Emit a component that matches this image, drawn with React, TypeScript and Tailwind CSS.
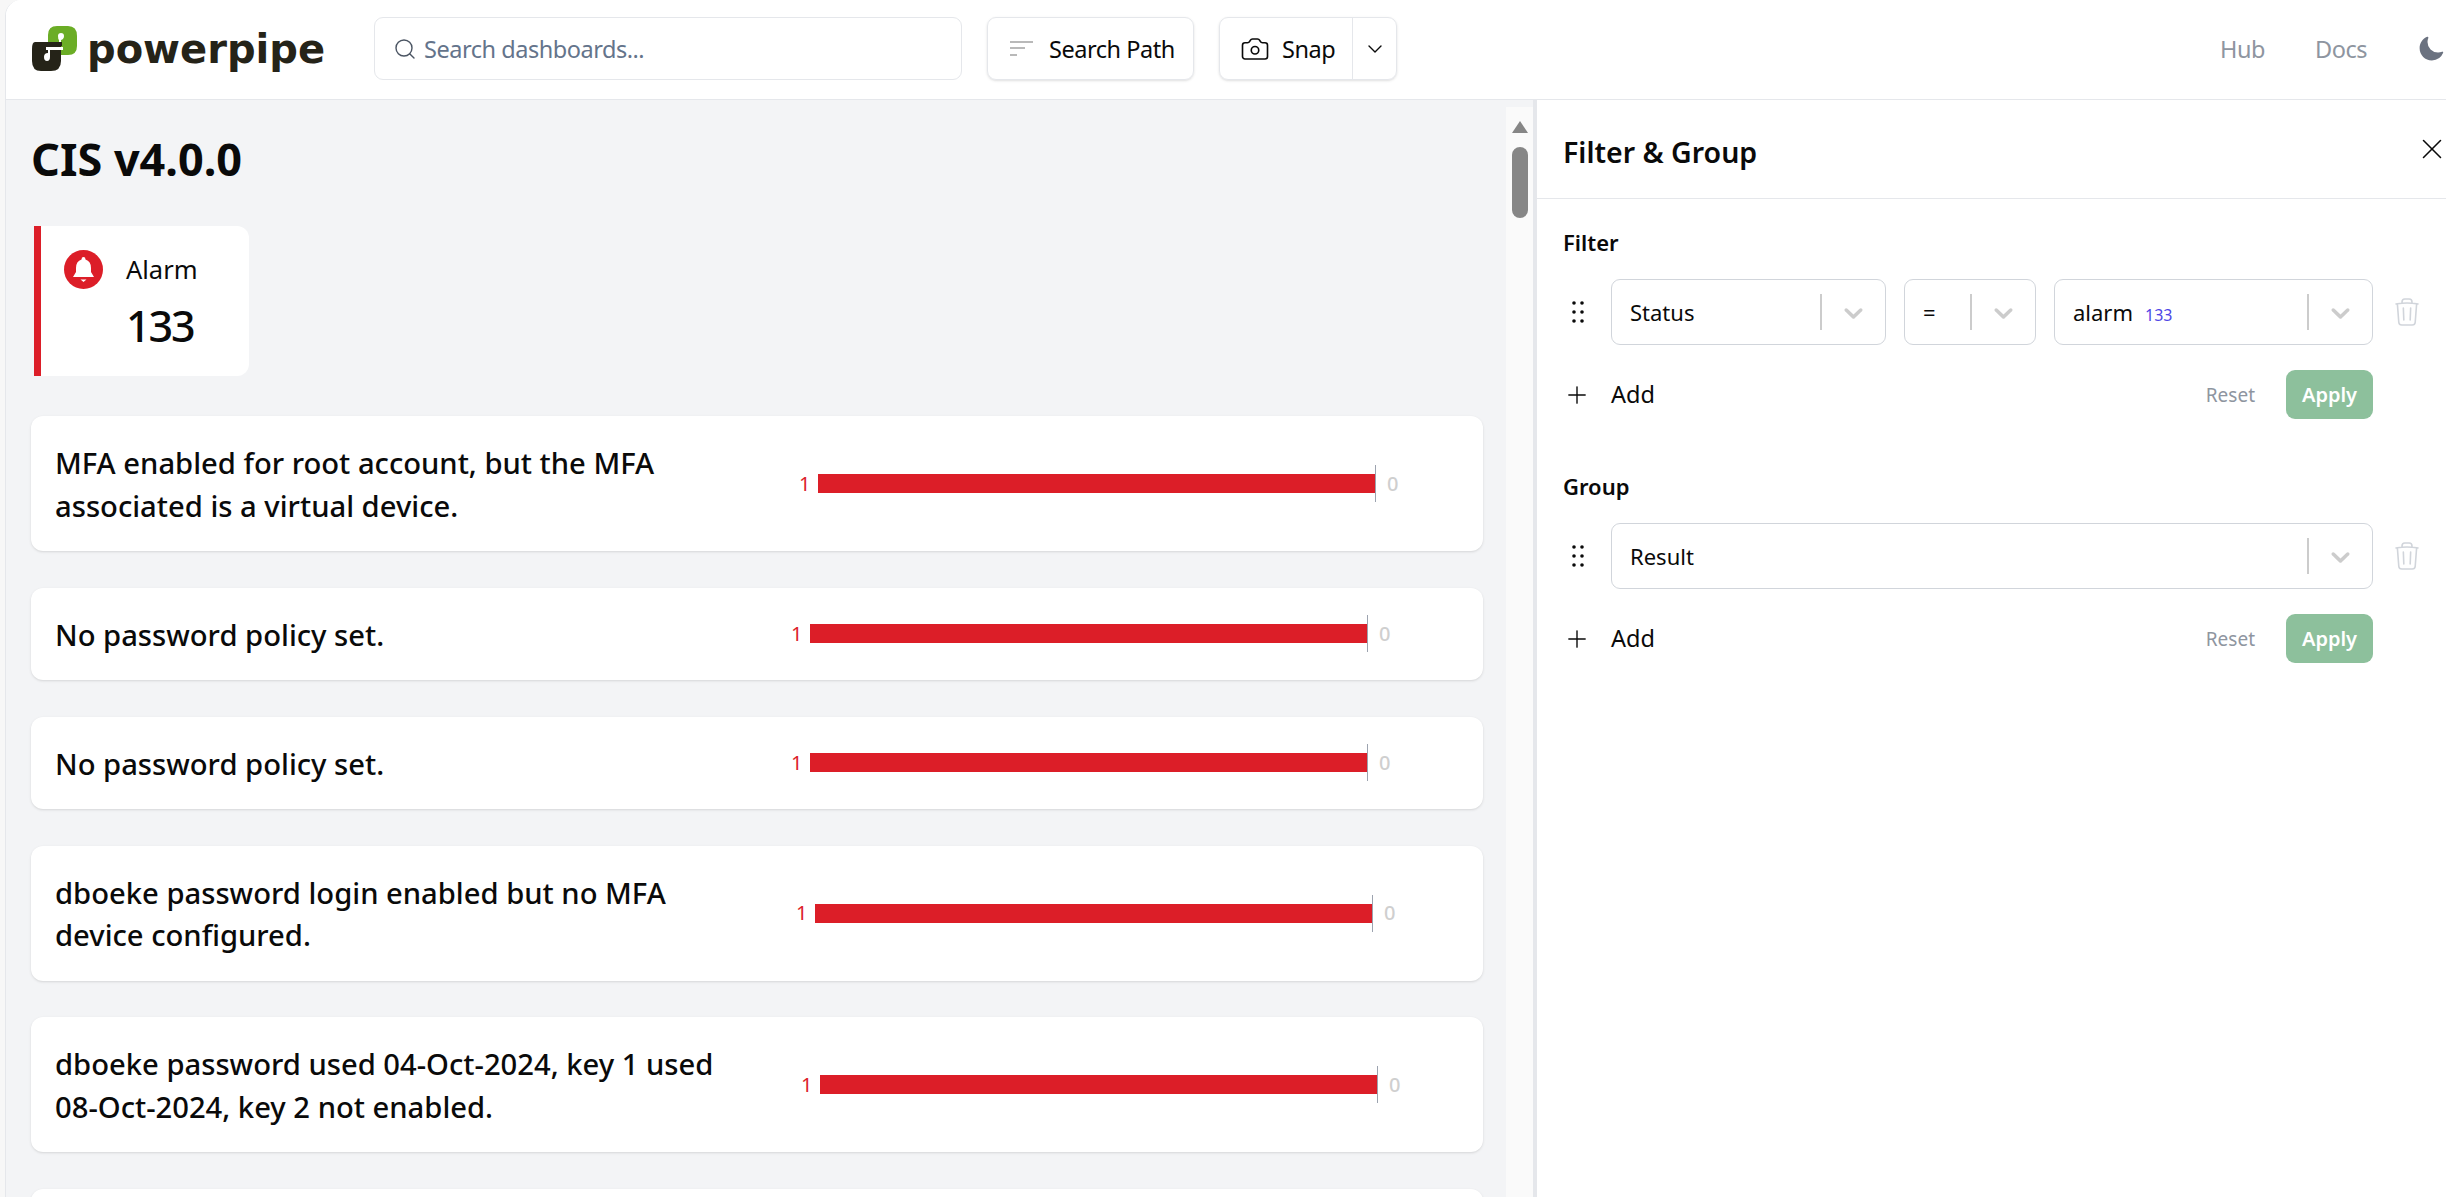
import { Camera, ChevronDown, Plus, Search, X } from 'lucide-react';
import { HiMoon, HiOutlineTrash } from 'react-icons/hi2';

const rows = [
  { lines: ['MFA enabled for root account, but the MFA', 'associated is a virtual device.'], offset: 'ml-[61px]' },
  { lines: ['No password policy set.'], offset: 'ml-[53px]' },
  { lines: ['No password policy set.'], offset: 'ml-[53px]' },
  { lines: ['dboeke password login enabled but no MFA', 'device configured.'], offset: 'ml-[58px]' },
  { lines: ['dboeke password used 04-Oct-2024, key 1 used', '08-Oct-2024, key 2 not enabled.'], offset: 'ml-[63px]' },
  { lines: [''], offset: 'ml-[60px]' },
];

const Logo = () => (
  <div className="flex items-center w-[368px] pl-[26px] shrink-0">
    <svg width="45" height="45" viewBox="0 0 45 45" className="shrink-0">
      <path d="M16 9 Q16 0 25 0 H36 Q45 0 45 10 V20 Q45 29 36 29 H26 V23 H29 V14 Q32 13 32 10 Q32 7 29 7 Q26 7 26 10 Q26 13 27 14 V20 H16 Z" fill="#6bad26" />
      <path d="M3 16 H30 V20 H29 V35 Q29 45 19 45 H9 Q0 45 0 35 V23 Q0 16 3 16 Z" fill="#252318" />
      <path d="M16 22 V27 Q12 27 12 31 Q12 35 15 35 Q18 35 18 31 V22 Z" fill="#ffffff" />
      <rect x="14" y="21" width="17" height="3" fill="#ffffff" />
    </svg>
    <span className="ml-[10px] font-['DejaVu_Sans',sans-serif] font-bold text-[40px] leading-none text-[#252318]">powerpipe</span>
  </div>
);

const Header = () => (
  <header className="h-[100px] shrink-0 flex items-center bg-white border-b border-[#e5e7eb] pb-[2px]">
    <Logo />
    <div className="w-[588px] h-[63px] flex items-center border border-[#e5e7eb] rounded-[9px] pl-[18px]">
      <Search size={24} strokeWidth={1.4} className="text-[#4b5563]" />
      <span className="ml-[7px] translate-y-[1px] text-[23.5px] tracking-[-0.02em] text-[#64748b]">Search dashboards...</span>
    </div>
    <div className="ml-[25px] w-[207px] h-[63px] flex items-center border border-[#e5e7eb] rounded-[9px] shadow-sm pl-[22px]">
      <svg width="23" height="16" viewBox="0 0 23 16" className="text-[#a3a3a3]">
        <path d="M0 1H23M0 7H15M0 14H7" stroke="currentColor" strokeWidth="1.6" fill="none" />
      </svg>
      <span className="ml-[16px] translate-y-[1px] text-[23.5px] tracking-[-0.02em] text-[#0a0a0a]">Search Path</span>
    </div>
    <div className="ml-[25px] w-[178px] h-[63px] flex items-center border border-[#e5e7eb] rounded-[9px] shadow-sm">
      <div className="w-[133px] h-full flex items-center pl-[20px] border-r border-[#e5e7eb]">
        <Camera size={30} strokeWidth={1.3} className="text-[#0a0a0a]" />
        <span className="ml-[12px] translate-y-[1px] text-[23.5px] tracking-[-0.02em] text-[#0a0a0a]">Snap</span>
      </div>
      <ChevronDown size={24} strokeWidth={1.4} className="ml-[10px] text-[#0a0a0a]" />
    </div>
    <div className="ml-auto flex items-center text-[23.5px] tracking-[-0.02em] text-[#8e95a0]">
      <span className="translate-y-[1px]">Hub</span>
      <span className="ml-[50px] translate-y-[1px]">Docs</span>
      <HiMoon size={28} className="ml-[50px] mr-[1px] text-[#6b7280]" />
    </div>
  </header>
);

const BellBadge = () => (
  <svg width="39" height="39" viewBox="0 0 39 39" className="shrink-0">
    <circle cx="19.5" cy="19.5" r="19.5" fill="#dc1e28" />
    <path d="M19.5 7 Q21.5 7 21.5 9.4 Q27 11 27 18 V22 L30 27 H9 L12 22 V18 Q12 11 17.5 9.4 Q17.5 7 19.5 7 Z" fill="#ffffff" />
    <path d="M16.5 29.5 H22.5 L19.5 32 Z" fill="#ffffff" />
  </svg>
);

const StatCard = () => (
  <div className="ml-[2px] mt-[37px] w-[215px] h-[150px] bg-white rounded-r-[12px] border-l-[7px] border-[#dc1e28] flex pl-[23px] pt-[24px]">
    <BellBadge />
    <div className="ml-[23px]">
      <p className="text-[25.5px] leading-[39px] text-[#0a0a0a]">Alarm</p>
      <p className="mt-[7px] text-[43px] leading-[60px] font-medium tracking-[-0.05em] text-[#0a0a0a]">133</p>
    </div>
  </div>
);

const BarRow = ({ lines, offset }: { lines: string[]; offset: string }) => (
  <div className="bg-white rounded-[12px] shadow-sm py-[25px] pl-[24px] flex items-center min-h-[92px] shrink-0">
    <div className="w-[683px] shrink-0 translate-y-[1px] text-[29.2px] leading-[42.5px] font-medium text-[#0a0a0a]">
      {lines.map((line, i) => (
        <p key={i} className="whitespace-nowrap">{line}</p>
      ))}
    </div>
    {lines[0] !== '' && (
      <div className={`${offset} flex items-center`}>
        <span className="w-[19px] text-[20px] text-[#dc1e28]">1</span>
        <div className="w-[557px] h-[19px] bg-[#dc1e28]" />
        <div className="w-px h-[37px] bg-[#9ca3af]" />
        <span className="ml-[11px] text-[20px] font-medium text-[#cfcfcf]">0</span>
      </div>
    )}
  </div>
);

const Scrollbar = () => (
  <div className="w-[27px] shrink-0 pt-[7px] bg-[#f3f4f6] flex">
    <div className="flex-1 bg-[#fafafa] flex flex-col items-center">
      <div className="mt-[14px] w-0 h-0 border-x-[8px] border-x-transparent border-b-[12px] border-b-[#868686]" />
      <div className="mt-[14px] w-[16px] h-[71px] rounded-full bg-[#868686]" />
    </div>
  </div>
);

const Chevron = () => (
  <svg width="31" height="31" viewBox="0 0 20 20" fill="#cccccc">
    <path d="M4.516 7.548c0.436-0.446 1.043-0.481 1.576 0l3.908 3.747 3.908-3.747c0.533-0.481 1.141-0.446 1.574 0 0.436 0.445 0.408 1.197 0 1.615-0.406 0.418-4.695 4.502-4.695 4.502-0.217 0.223-0.502 0.335-0.787 0.335s-0.57-0.112-0.789-0.335c0 0-4.287-4.084-4.695-4.502s-0.436-1.17 0-1.615z" />
  </svg>
);

const Select = ({ width, children }: { width: string; children: React.ReactNode }) => (
  <div className={`${width} h-[66px] flex items-center border border-[#d1d5db] rounded-[9px] pl-[18px] pr-[5px] text-[22px] text-[#0a0a0a]`}>
    <div className="flex-1 flex items-baseline">{children}</div>
    <div className="w-[2px] h-[36px] bg-[#cccccc]" />
    <span className="ml-[16px] mr-[11px]"><Chevron /></span>
  </div>
);

const Grip = () => (
  <svg width="12" height="24" viewBox="0 0 12 24" className="ml-[9px] mr-[27px] shrink-0 text-[#0a0a0a]">
    {[2, 10].map(x => [3, 12, 21].map(y => <circle key={`${x}-${y}`} cx={x} cy={y} r="1.8" fill="currentColor" />))}
  </svg>
);

const AddRow = () => (
  <div className="mt-[25px] w-[810px] h-[49px] flex items-center">
    <Plus size={28} strokeWidth={1.2} className="text-[#0a0a0a]" />
    <span className="ml-[20px] text-[23.5px] text-[#0a0a0a]">Add</span>
    <span className="ml-auto translate-y-[1px] text-[19px] text-[#8e95a0]">Reset</span>
    <button className="ml-[31px] w-[87px] h-[49px] rounded-[9px] bg-[#8dc09c] text-[20px] font-semibold text-white">Apply</button>
  </div>
);

const FilterPanel = () => (
  <aside className="w-[913px] shrink-0 border-l-[4px] border-[#e5e7eb] bg-white">
    <div className="h-[99px] flex items-center justify-between pl-[26px] border-b border-[#e5e7eb]">
      <h2 className="translate-y-[3px] text-[28.5px] font-semibold text-[#0a0a0a]">Filter &amp; Group</h2>
      <X size={34} strokeWidth={1.1} className="mr-[-3px] text-[#0a0a0a]" />
    </div>
    <div className="pl-[26px] pt-[26px]">
      <h3 className="text-[22px] leading-[34px] font-semibold text-[#0a0a0a]">Filter</h3>
      <div className="mt-[20px] flex items-center">
        <Grip />
        <div className="flex gap-[18px]">
          <Select width="w-[275px]">Status</Select>
          <Select width="w-[132px]">=</Select>
          <Select width="w-[319px]">
            alarm<span className="ml-[12px] text-[16px] text-[#4f46e5]">133</span>
          </Select>
        </div>
        <HiOutlineTrash size={32} strokeWidth={1.2} className="ml-[18px] text-[#d1d5db]" />
      </div>
      <AddRow />
      <h3 className="mt-[50px] text-[22px] leading-[34px] font-semibold text-[#0a0a0a]">Group</h3>
      <div className="mt-[20px] flex items-center">
        <Grip />
        <Select width="w-[762px]">Result</Select>
        <HiOutlineTrash size={32} strokeWidth={1.2} className="ml-[18px] text-[#d1d5db]" />
      </div>
      <AddRow />
    </div>
  </aside>
);

export default function App() {
  return (
    <div className="h-[1197px] overflow-hidden bg-[#f7f7f7] pl-[5px] font-['Noto_Sans',sans-serif]">
      <div className="h-full flex flex-col bg-white border-l border-[#e5e7eb] rounded-tl-[16px] overflow-hidden">
        <Header />
        <div className="flex-1 flex min-h-0">
          <main className="flex-1 min-w-0 bg-[#f3f4f6] overflow-hidden pl-[26px] pr-[23px]">
            <h1 className="mt-[29px] ml-[-1px] text-[45px] leading-[60px] font-bold text-[#0a0a0a]">CIS v4.0.0</h1>
            <StatCard />
            <div className="ml-[-1px] mt-[40px] flex flex-col gap-[36.5px]">
              {rows.map((row, i) => (
                <BarRow key={i} lines={row.lines} offset={row.offset} />
              ))}
            </div>
          </main>
          <Scrollbar />
          <FilterPanel />
        </div>
      </div>
    </div>
  );
}
